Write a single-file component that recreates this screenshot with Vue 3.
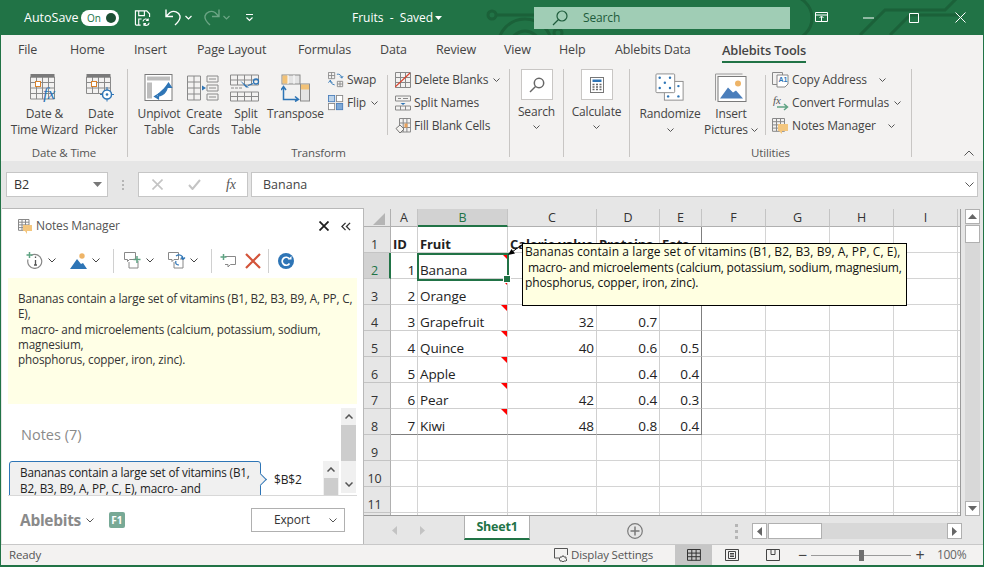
<script setup>
const tabs = [
  ['File', 52], ['Home', 64], ['Insert', 63], ['Page Layout', 101], ['Formulas', 82], ['Data', 56],
  ['Review', 68], ['View', 55], ['Help', 56], ['Ablebits Data', 107], ['Ablebits Tools', 110]
]
const cols = ['A', 'B', 'C', 'D', 'E', 'F', 'G', 'H', 'I']
const rows = [
  ['ID', 'Fruit', 'Calorie value', 'Proteins', 'Fats'],
  ['1', 'Banana', '', '', ''],
  ['2', 'Orange', '', '', ''],
  ['3', 'Grapefruit', '32', '0.7', ''],
  ['4', 'Quince', '40', '0.6', '0.5'],
  ['5', 'Apple', '', '0.4', '0.4'],
  ['6', 'Pear', '42', '0.4', '0.3'],
  ['7', 'Kiwi', '48', '0.8', '0.4'],
  ['', '', '', '', ''],
  ['', '', '', '', ''],
  ['', '', '', '', '']
]
const extra = [0, 1, 2, 3, 4]
function cellClass(r, c) {
  return {
    bold: r === 0,
    num: r > 0 && c !== 1,
    note: c === 1 && r > 0 && r < 8,
    inTable: r < 8 && c < 5,
    edgeR: r < 8 && c === 4,
    edgeB: r === 7 && c < 5
  }
}
function grid(x, y, nx, ny, w, h) {
  let d = ''
  for (let i = 0; i <= nx; i++) d += `M${x + i * w} ${y}v${ny * h}`
  for (let j = 0; j <= ny; j++) d += `M${x} ${y + j * h}h${nx * w}`
  return d
}
</script>

<template>
  <div class="app">
    <header class="title">
      <svg class="circuit" width="984" height="35" viewBox="0 0 984 35">
        <g fill="none" stroke="#1b6139" stroke-width="3">
          <circle cx="492" cy="15" r="4" />
          <path d="M496 15h38M498 46a27 27 0 0 1 54 0M510 46a15 15 0 0 1 30 0M790 -4a22 22 0 0 1 0 44M860 35l25-25h60l12-12M890 35l20-20h50" />
          <circle cx="558" cy="33" r="4" />
        </g>
      </svg>
      <span class="autosave">AutoSave</span>
      <span class="toggle"><b>On</b><i></i></span>
      <svg class="t-save" width="17" height="18" viewBox="0 0 18 18" fill="none" stroke="#fff" stroke-width="1.2"><path d="M7 16.5H2.5a1 1 0 0 1-1-1V1.5h12l3 3V8M5 1.5v5h6v-5M5 16V10h3" /><path d="M9.5 12.5a3 3 0 0 1 5.5-1M16 14a3 3 0 0 1-5.5 1.500M15 9.500v2.200h-2.200M10.500 17.200V15h2.200" /></svg>
      <svg class="t-undo" width="18" height="19" viewBox="0 0 18 19" fill="none" stroke="#fff" stroke-width="1.4"><path d="M2 1.500v7h7M2.200 8.200 6 4.500c4-2.500 9-.5 10 3.500 .6 3-1 5.500-5 9" /></svg>
      <svg class="t-chev c1" width="7" height="5" viewBox="0 0 7 5" fill="none" stroke="#fff" stroke-width="1.200"><path d="M.5 1l3 3 3-3" /></svg>
      <svg class="t-redo" width="18" height="19" viewBox="0 0 18 19" fill="none" stroke="#6ba585" stroke-width="1.400"><path d="M16 1.500v7H9M15.800 8.200 12 4.500C8 2 3 4 2 8c-.6 3 1 5.500 5 9" /></svg>
      <svg class="t-chev c2" width="7" height="5" viewBox="0 0 7 5" fill="none" stroke="#6ba585" stroke-width="1.200"><path d="M.5 1l3 3 3-3" /></svg>
      <svg class="t-custom" width="9" height="9" viewBox="0 0 9 9" fill="none" stroke="#fff" stroke-width="1.100"><path d="M1 1.500h7M1.500 4.500 4.500 7.500l3-3" /></svg>
      <span class="docname">Fruits&nbsp; -&nbsp; Saved</span>
      <svg class="t-drop" width="7" height="4" viewBox="0 0 7 4"><path d="M0 0h7L3.500 4z" fill="#fff" /></svg>
      <div class="searchbox">
        <svg width="16" height="16" viewBox="0 0 16 16" fill="none" stroke="#1f5c3c" stroke-width="1.200"><circle cx="10" cy="6" r="5" /><path d="M6.500 9.500 1 15" /></svg>
        <span>Search</span>
      </div>
      <svg class="win w1" width="14" height="11" viewBox="0 0 14 11" fill="none" stroke="#fff"><path d="M.5.500h12v9H.5zM.5 3h12M6.500 9V4.500M4.500 6l2-2 2 2" /></svg>
      <svg class="win w2" width="11" height="2" viewBox="0 0 11 2"><path d="M0 1h11" stroke="#fff" /></svg>
      <svg class="win w3" width="10" height="10" viewBox="0 0 10 10" fill="none" stroke="#fff"><path d="M.5.500h9v9h-9z" /></svg>
      <svg class="win w4" width="11" height="11" viewBox="0 0 11 11" fill="none" stroke="#fff"><path d="M.5.500l10 10M10.500.500l-10 10" /></svg>
    </header>

    <section class="ribbon">
      <nav class="tabs">
        <span v-for="t in tabs" :key="t[0]" class="tab" :class="{ active: t[0] === 'Ablebits Tools' }" :style="{ width: t[1] + 'px' }"><em>{{ t[0] }}</em></span>
      </nav>
      <div class="groups">
        <div class="group g-date">
          <div class="group-body">
            <div class="big w74">
              <svg width="30" height="28" viewBox="0 0 30 28" fill="none"><path :d="grid(.5,3.500,4,4,6,5.500)" stroke="#8a8a8a" /><rect x=".5" y=".5" width="24" height="3.500" fill="#7a7a7a" /><rect x="5.500" y="8" width="5" height="5" fill="#fff" stroke="#d9812b" /><text x="13" y="25" class="fx">fx</text></svg>
              <span>Date &amp;<br>Time Wizard</span>
            </div>
            <div class="big w38">
              <svg width="30" height="28" viewBox="0 0 30 28" fill="none"><path :d="grid(.5,3.500,4,3,6,5.500)" stroke="#8a8a8a" /><rect x=".5" y=".5" width="24" height="3.500" fill="#7a7a7a" /><rect x="5.500" y="8" width="5" height="5" fill="#fff" stroke="#d9812b" /><circle cx="21" cy="21" r="4.500" fill="#fff" stroke="#2e75b6" stroke-width="1.500" /><circle cx="21" cy="21" r="1.300" fill="#2e75b6" /><path d="M21 13.500v3M21 25.500v2.500M14 21h2.500M25.500 21H28" stroke="#2e75b6" /></svg>
              <span>Date<br>Picker</span>
            </div>
          </div>
          <label>Date &amp; Time</label>
        </div>

        <div class="group g-transform">
          <div class="group-body">
            <div class="big w46">
              <svg width="30" height="28" viewBox="0 0 30 28"><rect x="1" y="1" width="27" height="26" fill="#fff" stroke="#7a7a7a" /><path d="M3 3h23v4H3zM3 9h5v16H3z" fill="#bdbdbd" /><path d="M11 23c7 0 12-4 13-12M10.500 23l4-2.500v5zM24.500 9.500l-3 4.500h6z" fill="#2e75b6" stroke="#2e75b6" stroke-width="1.200" /></svg>
              <span>Unpivot<br>Table</span>
            </div>
            <div class="big w44">
              <svg width="34" height="28" viewBox="0 0 34 28" fill="none"><path :d="grid(.5,2.500,2,4,6.500,6)" stroke="#8a8a8a" /><path d="M20 2.500h11v6H20zM20 11.500h11v6H20zM20 20.500h11v6H20zM22 5.500h7M22 14.500h7M22 23.500h7" stroke="#8a8a8a" /><path d="M15 12l4 2.500-4 2.500z" fill="#2e75b6" /></svg>
              <span>Create<br>Cards</span>
            </div>
            <div class="big w40">
              <svg width="32" height="28" viewBox="0 0 32 28" fill="none"><path :d="grid(.5,1.500,4,2,7,5)" stroke="#8a8a8a" /><path :d="grid(.5,18.500,4,2,7,4.500)" stroke="#8a8a8a" /><path d="M1 14.500h12" stroke="#8a8a8a" stroke-dasharray="3 1" /><path d="M10 7l9 7h-3z" fill="#2e75b6" /><circle cx="26" cy="8" r="2.500" stroke="#2e75b6" stroke-width="1.300" /><path d="M23 10l-5 2" stroke="#2e75b6" stroke-width="1.300" /></svg>
              <span>Split<br>Table</span>
            </div>
            <div class="big w58">
              <svg width="30" height="28" viewBox="0 0 30 28" fill="none"><rect x="1" y="1.500" width="18" height="9" fill="#e4e4e4" stroke="#8a8a8a" /><rect x="1.500" y="2" width="5.500" height="8" fill="#f2c277" /><path d="M7 1.500v9M13 1.500v9" stroke="#fff" /><rect x="19.500" y="10.500" width="9" height="17" fill="#e4e4e4" stroke="#8a8a8a" /><rect x="20" y="11" width="8" height="5" fill="#f2c277" /><path d="M2.500 14v12h14M0 16.500l2.500-3.500 2.500 3.500M14 23l3.500 3-3.500 2" stroke="#2e75b6" stroke-width="1.500" /></svg>
              <span>Transpose</span>
            </div>
            <div class="smalls w63">
              <div class="small"><svg width="16" height="16" viewBox="0 0 18 18" fill="none"><path :d="grid(.5,.5,2,2,3.500,3.500)" stroke="#888" /><path :d="grid(10.500,10.500,2,2,3,3)" stroke="#888" /><path d="M10 2.500c3-.5 5 1 5.500 4M13.500 5l2 2 1.500-2.500M2.500 9c0 3 2 5 5 5.500M5 12.500l-2.500-3L.5 12" stroke="#2e75b6" /></svg><span>Swap</span></div>
              <div class="small"><svg width="16" height="16" viewBox="0 0 18 18"><rect x=".5" y=".5" width="7" height="7" fill="#bdd4ea" stroke="#4a7ebb" /><rect x="9.500" y=".5" width="7" height="7" fill="#fff" stroke="#888" /><rect x=".5" y="9.500" width="7" height="7" fill="#fff" stroke="#888" /><rect x="9.500" y="9.500" width="7" height="7" fill="#7fa9d6" stroke="#4a7ebb" /></svg><span>Flip</span><svg class="chev" width="7" height="4" viewBox="0 0 7 4"><path d="M.5.500l3 3 3-3" /></svg></div>
            </div>
            <div class="vsep"></div>
            <div class="smalls">
              <div class="small"><svg width="16" height="16" viewBox="0 0 16 16" fill="none"><path :d="grid(.5,.5,3,3,5,5)" stroke="#888" /><path d="M0 15 15 1" stroke="#d9432f" stroke-width="1.200" /></svg><span>Delete Blanks</span><svg class="chev" width="7" height="4" viewBox="0 0 7 4"><path d="M.5.500l3 3 3-3" /></svg></div>
              <div class="small"><svg width="16" height="16" viewBox="0 0 16 16" fill="none"><path d="M.5 1h15v5H.5zM.5 11h15v4H.5zM5.500 11v4M10.500 11v4M3 3.500h3M8 3.500h5" stroke="#888" /><path d="M5.500 8h5L8 10z" fill="#2e75b6" /></svg><span>Split Names</span></div>
              <div class="small"><svg width="16" height="16" viewBox="0 0 16 16" fill="none"><path :d="grid(4.500,.5,3,3,3.700,4.500)" stroke="#888" /><path d="M1 10.500 5 7l4 4-4 4z" fill="#f5f3f0" stroke="#777" /><rect x="9.500" y="5.500" width="3" height="4" fill="#e8a05a" /></svg><span>Fill Blank Cells</span></div>
            </div>
          </div>
          <label>Transform</label>
        </div>

        <div class="group g-search">
          <div class="tall">
            <div class="boxed"><svg width="16" height="16" viewBox="0 0 16 16" fill="none" stroke="#666" stroke-width="1.500"><circle cx="10" cy="6" r="4.700" /><path d="M6.500 9.500 1 15" /></svg></div>
            <span>Search</span>
            <svg class="chev" width="7" height="4" viewBox="0 0 7 4"><path d="M.5.500l3 3 3-3" /></svg>
          </div>
        </div>

        <div class="group g-calc">
          <div class="tall">
            <div class="boxed"><svg width="14" height="16" viewBox="0 0 14 16" fill="none"><rect x=".5" y=".5" width="13" height="15" stroke="#777" /><rect x="2.500" y="2.500" width="9" height="2.500" fill="#2e75b6" /><path d="M2.500 7.500h2M6 7.500h2M9.500 7.500h2M2.500 10h2M6 10h2M9.500 10h2M2.500 12.500h2M6 12.500h2M9.500 12.500h2" stroke="#666" stroke-width="1.300" /></svg></div>
            <span>Calculate</span>
            <svg class="chev" width="7" height="4" viewBox="0 0 7 4"><path d="M.5.500l3 3 3-3" /></svg>
          </div>
        </div>

        <div class="group g-util">
          <div class="group-body">
            <div class="big w64">
              <svg width="32" height="31" viewBox="0 0 32 31"><rect x="10" y="9" width="20" height="20" fill="#fff" stroke="#8a8a8a" /><rect x="1" y="1" width="20" height="20" rx="1" fill="#fff" stroke="#8a8a8a" /><g fill="#2e75b6"><circle cx="5" cy="5" r="1.300" /><circle cx="16" cy="5" r="1.300" /><circle cx="10.500" cy="10.500" r="1.300" /><circle cx="5" cy="16" r="1.300" /><circle cx="16" cy="16" r="1.300" /><circle cx="14" cy="25" r="1.300" /><circle cx="25" cy="25" r="1.300" /><circle cx="25" cy="14" r="1.300" /></g></svg>
              <span>Randomize</span>
              <svg class="chev" width="7" height="4" viewBox="0 0 7 4"><path d="M.5.500l3 3 3-3" /></svg>
            </div>
            <div class="big w58b">
              <svg width="32" height="28" viewBox="0 0 32 28"><path d="M.5 27V.5h27" fill="none" stroke="#9a9a9a" /><rect x="3" y="3" width="28" height="25" fill="#fff" stroke="#7a7a7a" /><circle cx="23" cy="10" r="3" fill="#eeb467" /><path d="M5 25 13 14l5 5 3-2 7 8z" fill="#4a7ebb" /></svg>
              <span>Insert<br>Pictures <svg class="chev inl" width="7" height="4" viewBox="0 0 7 4"><path d="M.5.500l3 3 3-3" /></svg></span>
            </div>
            <div class="vsep v2"></div>
            <div class="smalls">
              <div class="small"><svg width="17" height="17" viewBox="0 0 17 17" fill="none"><path d="M.5 1.500h10v12H.5z" stroke="#888" /><path d="M5 4h11v9l-3 3H5z" fill="#fff" stroke="#888" /><text x="6.500" y="11" class="a1">A1</text></svg><span>Copy Address</span><svg class="chev gap" width="7" height="4" viewBox="0 0 7 4"><path d="M.5.500l3 3 3-3" /></svg></div>
              <div class="small"><svg width="17" height="17" viewBox="0 0 17 17" fill="none"><text x="1" y="10" class="fx small-fx">fx</text><path d="M5 13h10M12 10l3.500 3-3.500 3" stroke="#5fa383" stroke-width="1.500" /></svg><span>Convert Formulas</span><svg class="chev" width="7" height="4" viewBox="0 0 7 4"><path d="M.5.500l3 3 3-3" /></svg></div>
              <div class="small"><svg width="17" height="17" viewBox="0 0 17 17" fill="none"><path :d="grid(.5,1.500,3,4,4,3.200)" stroke="#888" /><path d="M6 7h10v7h-6v3l-3-3H6z" fill="#f3c67e" /></svg><span>Notes Manager</span><svg class="chev gap" width="7" height="4" viewBox="0 0 7 4"><path d="M.5.500l3 3 3-3" /></svg></div>
            </div>
          </div>
          <label>Utilities</label>
        </div>

        <div class="collapse"><svg width="10" height="6" viewBox="0 0 10 6" fill="none" stroke="#555"><path d="M.5 5.500l4.500-4.500 4.500 4.500" /></svg></div>
      </div>
    </section>

    <section class="fbar">
      <div class="namebox"><span>B2</span><svg width="9" height="5" viewBox="0 0 9 5"><path d="M0 0h9L4.500 5z" fill="#777" /></svg></div>
      <div class="grip"><i></i><i></i><i></i></div>
      <div class="fbtns">
        <svg width="11" height="11" viewBox="0 0 11 11" fill="none" stroke="#c4c4c4" stroke-width="1.600"><path d="M.5.500l10 10M10.500.500l-10 10" /></svg>
        <svg width="13" height="11" viewBox="0 0 13 11" fill="none" stroke="#c4c4c4" stroke-width="2"><path d="M1 6l3.500 4L12 1" /></svg>
        <span class="fxbtn">fx</span>
      </div>
      <div class="finput"><span>Banana</span><svg class="chev" width="9" height="5" viewBox="0 0 9 5"><path d="M.5.500l4 4 4-4" /></svg></div>
    </section>

    <main class="body">
      <aside class="pane">
        <div class="pane-head">
          <svg width="15" height="15" viewBox="0 0 15 15" fill="none"><path :d="grid(.5,.5,3,4,3.500,2.700)" stroke="#888" /><path d="M5 6h9v6H9v3l-2-3H5z" fill="#f3c67e" /></svg>
          <span>Notes Manager</span>
          <svg class="px" width="10" height="10" viewBox="0 0 10 10" fill="none" stroke="#1f1f1f" stroke-width="1.800"><path d="M.5.500l9 9M9.500.500l-9 9" /></svg>
          <svg class="pdbl" width="10" height="9" viewBox="0 0 11 9" fill="none" stroke="#333" stroke-width="1.500"><path d="M5 .5 1 4.500l4 4M10 .5l-4 4 4 4" /></svg>
        </div>
        <div class="pane-tools">
          <svg class="i1" width="17" height="17" viewBox="0 0 17 17" fill="none"><path d="M5 3.500a7 7 0 1 1-3 4" stroke="#888" stroke-width="1.200" /><path d="M3.500 0v6M.5 3h6" stroke="#5fa383" stroke-width="1.500" /><path d="M9.500 4.500v1.500M9.500 8v5M8 13h3" stroke="#555" stroke-width="1.300" /></svg>
          <svg class="chev tb" width="8" height="5" viewBox="0 0 8 5"><path d="M.5.500l3.500 3.500 3.500-3.500" /></svg>
          <svg class="i2" width="17" height="16" viewBox="0 0 17 16"><circle cx="12" cy="3" r="2.700" fill="#eeb467" /><path d="M0 16 7 6l4 5 2-1 4 6z" fill="#2e75b6" /></svg>
          <svg class="chev tb" width="8" height="5" viewBox="0 0 8 5"><path d="M.5.500l3.500 3.500 3.500-3.500" /></svg>
          <i class="tsep s1"></i>
          <svg class="i3" width="18" height="17" viewBox="0 0 18 17" fill="none" stroke="#888"><path d="M.5.500h11v7h-6l-2 2v-2h-3zM5 10v6h9V9" /><path d="M13 4v7M9.500 7.500h7" stroke="#5fa383" stroke-width="1.500" /></svg>
          <svg class="chev tb" width="8" height="5" viewBox="0 0 8 5"><path d="M.5.500l3.500 3.500 3.500-3.500" /></svg>
          <svg class="i4" width="18" height="17" viewBox="0 0 18 17" fill="none" stroke="#888"><path d="M.5.500h10v7H6l-2 2v-2H.5zM6 10v6h9V7h-3" /><path d="M8 4c3-2 7-1 7 3M15 7.500l2-2M15 7.500l-2-2M11 13c-2 0-4-1-3-4" stroke="#2e75b6" stroke-width="1.200" /></svg>
          <svg class="chev tb" width="8" height="5" viewBox="0 0 8 5"><path d="M.5.500l3.500 3.500 3.500-3.500" /></svg>
          <i class="tsep s2"></i>
          <svg class="i5" width="16" height="16" viewBox="0 0 16 16" fill="none"><path d="M5 3.500h10.500v8h-5l-2.500 2.500v-2.500H5" stroke="#888" /><path d="M3.500 1v6M.5 4h6" stroke="#5fa383" stroke-width="1.500" /></svg>
          <svg class="i6" width="16" height="16" viewBox="0 0 16 16" fill="none" stroke="#d3543a" stroke-width="2.200"><path d="M1 1l14 14M15 1 1 15" /></svg>
          <i class="tsep s3"></i>
          <svg class="i7" width="16" height="16" viewBox="0 0 16 16"><circle cx="8" cy="8" r="8" fill="#2e75b6" /><path d="M11.500 6a4 4 0 1 0 0 4.500" fill="none" stroke="#fff" stroke-width="1.700" /><path d="M10 6.500h3.500V3z" fill="#fff" /></svg>
        </div>
        <div class="note-view">Bananas contain a large set of vitamins (B1, B2, B3, B9, A, PP, C,<br>E),<br>&nbsp;macro- and microelements (calcium, potassium, sodium,<br>magnesium,<br>phosphorus, copper, iron, zinc).</div>
        <div class="notes-list">
          <div class="notes-main">
            <h3>Notes (7)</h3>
            <div class="item-row">
              <div class="bubble">Bananas contain a large set of vitamins (B1,<br>B2, B3, B9, A, PP, C, E), macro- and</div>
              <span class="addr">$B$2</span>
              <div class="iscroll"><b><svg width="8" height="5" viewBox="0 0 8 5" fill="none" stroke="#555" stroke-width="1.500"><path d="M.5 4.500 4 1l3.500 3.500" /></svg></b><i></i></div>
            </div>
          </div>
          <div class="oscroll">
            <b><svg width="8" height="5" viewBox="0 0 8 5" fill="none" stroke="#555" stroke-width="1.500"><path d="M.5 4.500 4 1l3.500 3.500" /></svg></b>
            <i></i>
            <u></u>
            <b><svg width="8" height="5" viewBox="0 0 8 5" fill="none" stroke="#555" stroke-width="1.500"><path d="M.5.500 4 4l3.500-3.500" /></svg></b>
          </div>
        </div>
        <footer class="pane-foot">
          <strong>Ablebits</strong>
          <svg class="chev ab" width="8" height="5" viewBox="0 0 8 5"><path d="M.5.500l3.500 3.500 3.500-3.500" /></svg>
          <span class="f1">F1</span>
          <button class="export"><span>Export</span><svg class="chev" width="8" height="5" viewBox="0 0 8 5"><path d="M.5.500l3.500 3.500 3.500-3.500" /></svg></button>
        </footer>
      </aside>

      <section class="sheetwrap">
        <div class="sheetrow">
          <div class="sheet">
            <div class="corner"><svg width="12" height="12" viewBox="0 0 12 12"><path d="M12 0v12H0z" fill="#b5b5b5" /></svg></div>
            <div v-for="c in cols" :key="c" class="colh" :class="{ sel: c === 'B' }">{{ c }}</div>
            <div class="colh tail"></div>
            <template v-for="(row, r) in rows" :key="r">
              <div class="rowh" :class="{ sel: r === 1 }">{{ r + 1 }}</div>
              <div v-for="(v, c) in row" :key="c" class="cell" :class="cellClass(r, c)"><span>{{ v }}</span></div>
              <div v-for="e in extra" :key="'e' + e" class="cell"></div>
            </template>
            <div class="rowh stub"></div>
            <div v-for="i in 10" :key="'s' + i" class="stubc"></div>
            <div class="selection"><i></i></div>
            <svg class="leader" width="18" height="16" viewBox="0 0 18 16"><path d="M16 2 5 10" stroke="#000" /><path d="M1 13l3.500-6 3.500 4.500z" fill="#000" /></svg>
            <div class="tooltip"><span class="l1">Bananas contain a large set of vitamins (B1, B2, B3, B9, A, PP, C, E),</span><br><span class="l2">&nbsp;macro- and microelements (calcium, potassium, sodium, magnesium,</span><br>phosphorus, copper, iron, zinc).</div>
          </div>
          <div class="vscroll">
            <b><svg width="9" height="5" viewBox="0 0 9 5"><path d="M4.500 0 9 5H0z" fill="#666" /></svg></b>
            <i></i>
            <u></u>
            <b><svg width="9" height="5" viewBox="0 0 9 5"><path d="M0 0h9L4.500 5z" fill="#666" /></svg></b>
          </div>
        </div>
        <div class="tabsbar">
          <svg class="nav n1" width="5" height="9" viewBox="0 0 5 9"><path d="M5 0v9L0 4.500z" fill="#c3c3c3" /></svg>
          <svg class="nav n2" width="5" height="9" viewBox="0 0 5 9"><path d="M0 0v9l5-4.500z" fill="#c3c3c3" /></svg>
          <div class="sheettab">Sheet1</div>
          <svg class="plus" width="16" height="16" viewBox="0 0 16 16" fill="none" stroke="#7a7a7a"><circle cx="8" cy="8" r="7.300" stroke-width="1.200" /><path d="M8 3.500v9M3.500 8h9" stroke-width="1.500" /></svg>
          <div class="vdots"><i></i><i></i><i></i></div>
          <div class="hscroll">
            <b><svg width="5" height="9" viewBox="0 0 5 9"><path d="M5 0v9L0 4.500z" fill="#666" /></svg></b>
            <i></i>
            <u></u>
            <b><svg width="5" height="9" viewBox="0 0 5 9"><path d="M0 0v9l5-4.500z" fill="#666" /></svg></b>
          </div>
        </div>
      </section>
    </main>

    <footer class="status">
      <span class="ready">Ready</span>
      <svg class="ds" width="16" height="14" viewBox="0 0 16 14" fill="none" stroke="#555"><path d="M5 10H.5V.5h13V7" /><path d="M6 9h2l1-1.500L10 9h2v2l1 1-1 1h-2l-1 1-1-1H6v-1l-1-1 1-1z" /></svg>
      <span class="dstext">Display Settings</span>
      <div class="view on"><svg width="14" height="12" viewBox="0 0 14 12" fill="none"><path :d="grid(.5,.5,3,3,4.300,3.600)" stroke="#333" /></svg></div>
      <div class="view v-page"><svg width="14" height="12" viewBox="0 0 14 12" fill="none" stroke="#444"><path d="M.5.500h13v11H.5zM3.500 2.500h7v7h-7zM5 4.500h4M5 6h4M5 7.500h4" /></svg></div>
      <div class="view v-break"><svg width="14" height="12" viewBox="0 0 14 12" fill="none" stroke="#444"><path d="M.5 11.500V.5h13v11M5 .5v5h4v-5M.5 11.500h13" /></svg></div>
      <span class="zm">−</span>
      <div class="slider"><i></i></div>
      <span class="zp">+</span>
      <span class="pct">100%</span>
    </footer>
  </div>
</template>

<style>
html, body { margin: 0; padding: 0; background: #217346; }
</style>

<style scoped>
.app {
  width: 984px; height: 567px; box-sizing: border-box; overflow: hidden;
  display: flex; flex-direction: column;
  background: #217346; padding: 0 1px 2px 1px;
  font: 12px/16px "Open Sans", "Noto Sans", sans-serif; color: #444;
  letter-spacing: -.15px;
}
svg { display: block; flex: none; }
.chev { fill: none; stroke: #555; stroke-width: 1; }
.chev.inl { display: inline-block; vertical-align: 2px; }

.title { position: relative; height: 35px; flex: none; display: flex; align-items: center; color: #fff; }
.circuit { position: absolute; left: -1px; top: 0; }
.title > *:not(.circuit) { position: relative; flex: none; }
.autosave { margin-left: 23px; width: 57px; font-size: 12.500px; letter-spacing: 0; }
.toggle { width: 38px; height: 16px; border-radius: 8px; background: #fff; display: flex; align-items: center; justify-content: space-between; padding: 0 3px 0 6px; box-sizing: border-box; }
.toggle b { font-weight: 400; font-size: 10px; color: #217346; }
.toggle i { width: 10px; height: 10px; border-radius: 50%; background: #1c4f33; }
.t-save { margin-left: 15px; }
.t-undo { margin-left: 13px; }
.t-chev.c1 { margin-left: 3px; }
.t-redo { margin-left: 11px; }
.t-chev.c2 { margin-left: 2px; }
.t-custom { margin-left: 15px; }
.docname { margin-left: 98px; width: 80px; letter-spacing: 0; white-space: nowrap; }
.t-drop { margin-left: 3px; }
.searchbox { margin-left: 92px; width: 256px; height: 22px; background: #a0cdb5; display: flex; align-items: center; color: #1f5c3c; padding-left: 18px; box-sizing: border-box; gap: 15px; }
.win.w1 { margin-left: 25px; }
.win.w2 { margin-left: 34px; }
.win.w3 { margin-left: 35px; }
.win.w4 { margin-left: 36px; }

.ribbon { height: 126px; flex: none; background: #f3f2f1; display: flex; flex-direction: column; }
.tabs { height: 31px; display: flex; align-items: center; flex: none; padding-left: 17px; }
.tab { display: flex; flex: none; justify-content: flex-start; height: 31px; line-height: 30px; font-size: 12.500px; white-space: nowrap; }
.tab em { display: block; height: 28px; font-style: normal; position: relative; }
.tab.active { font-weight: 600; color: #444; font-size: 12.800px; }
.tab.active em::after { content: ""; position: absolute; left: 0; right: 0; bottom: 0; height: 2px; background: #217346; }
.groups { display: flex; flex: 1; min-height: 0; position: relative; }
.group { border-right: 1px solid #c8c6c4; display: flex; flex-direction: column; box-sizing: border-box; margin: 3px 0 4px; }
.group-body { flex: 1; display: flex; min-height: 0; }
.group label { text-align: center; height: 16px; line-height: 15px; font-size: 11.500px; color: #555; margin-bottom: -4px; }
.g-date { width: 127px; padding-left: 6px; }
.g-date label { margin-left: -6px; }
.g-transform { width: 382px; padding-left: 8px; }
.g-transform label { margin-left: -8px; }
.g-search { width: 54px; }
.g-calc { width: 66px; }
.g-util { width: 282px; padding-left: 8px; }
.g-util label { margin-left: -8px; }
.big { display: flex; flex-direction: column; align-items: center; flex: none; text-align: center; padding-top: 4px; box-sizing: border-box; white-space: nowrap; }
.big > svg:first-child { height: 29px; margin-bottom: 4px; }
.w74 { width: 75px; }
.w38 { width: 38px; }
.w46 { width: 46px; }
.w44 { width: 44px; }
.w40 { width: 40px; }
.w58 { width: 58px; padding-left: 1px; }
.w63 { width: 58px; flex: none; margin-left: 4px; }
.w64 { width: 64px; }
.w58b { width: 58px; }
.w64 .chev { margin-top: 6px; }
.smalls { display: flex; flex-direction: column; margin-top: -1px; }
.small { height: 23px; display: flex; align-items: center; gap: 3px; white-space: nowrap; }
.small .chev { margin-left: 2px; }
.small .chev.gap { margin-left: 9px; }
.vsep { width: 1px; height: 60px; background: #c8c6c4; margin: 6px 7px 0 1px; flex: none; }
.vsep.v2 { margin: 6px 6px 0 5px; }
.tall { display: flex; flex-direction: column; align-items: center; }
.boxed { width: 32px; height: 31px; box-sizing: border-box; background: #fff; border: 1px solid #c8c6c4; display: flex; align-items: center; justify-content: center; margin-bottom: 4px; }
.tall .chev { margin-top: 5px; }
.collapse { position: absolute; right: 9px; bottom: 5px; }
.fx { font: italic 17px "Liberation Serif", serif; fill: #2e75b6; letter-spacing: 0; }
.small-fx { font-size: 11px; fill: #555; }
.a1 { font: 700 7px "Liberation Sans", sans-serif; fill: #2e75b6; letter-spacing: 0; }

.fbar { height: 47px; flex: none; background: #e6e6e6; display: flex; padding: 11px 5px 0 5px; box-sizing: border-box; }
.namebox { width: 102px; height: 25px; box-sizing: border-box; background: #fff; border: 1px solid #c6c6c6; display: flex; align-items: center; justify-content: space-between; padding: 0 5px 0 7px; color: #333; font-size: 12.500px; }
.grip { width: 30px; display: flex; flex-direction: column; align-items: center; justify-content: center; gap: 2px; height: 25px; }
.grip i { width: 2px; height: 2px; background: #b5b5b5; }
.fbtns { width: 110px; height: 25px; box-sizing: border-box; background: #fff; border: 1px solid #c6c6c6; display: flex; align-items: center; justify-content: space-between; padding: 0 11px 0 13px; }
.fxbtn { font: italic 400 14px "Liberation Serif", serif; color: #555; letter-spacing: 0; }
.finput { margin-left: 3px; width: 727px; height: 25px; box-sizing: border-box; background: #fff; border: 1px solid #c6c6c6; display: flex; align-items: center; justify-content: space-between; padding: 0 3px 0 11px; color: #444; font-size: 12.500px; letter-spacing: 0; }

.body { flex: 1; min-height: 0; display: flex; background: #e6e6e6; }
.pane { width: 362px; flex: none; margin-left: 1px; background: #fff; border-top: 1px solid #b8b8b8; display: flex; flex-direction: column; box-sizing: border-box; border-right: 1px solid #b8b8b8; }
.pane-head { height: 34px; flex: none; display: flex; align-items: center; padding: 0 12px 0 16px; gap: 3px; }
.pane-head span { color: #555; white-space: nowrap; flex: none; }
.pane-head .px { margin-left: auto; }
.pane-head .pdbl { margin-left: 9px; }
.pane-tools { height: 35px; flex: none; display: flex; align-items: center; padding-left: 24px; }
.pane-tools .chev { stroke: #444; }
.chev.tb { margin-left: 4px; }
.i1 + .chev.tb, .i2 + .chev.tb { margin-left: 5px; }
.i2 { margin-left: 14px; }
.i4 { margin-left: 14px; }
.i6 { margin-left: 9px; }
.tsep { width: 1px; height: 24px; background: #d0d0d0; flex: none; }
.tsep.s1 { margin: 0 10px 0 13px; }
.tsep.s2 { margin: 0 8px 0 13px; }
.tsep.s3 { margin: 0 9px 0 7px; }
.note-view { height: 126px; flex: none; margin: 0 6px; box-sizing: border-box; background: #ffffe6; padding: 13px 10px 0 10px; font-size: 11.700px; line-height: 15.300px; color: #333; white-space: nowrap; }
.notes-list { height: 91px; flex: none; display: flex; overflow: hidden; padding: 4px 0 0 6px; box-sizing: border-box; }
.notes-main { width: 333px; flex: none; display: flex; flex-direction: column; overflow: hidden; }
.notes-main h3 { margin: 15px 0 0 13px; height: 38px; flex: none; font-weight: 400; font-size: 14.500px; line-height: 24px; color: #8a8a8a; letter-spacing: 0; }
.item-row { display: flex; height: 34px; flex: none; padding-right: 2px; box-sizing: content-box; }
.bubble { width: 252px; height: 44px; flex: none; box-sizing: border-box; margin-left: 1px; border: 1px solid #2e75b6; border-radius: 3px; background: #f0f0f0; padding: 3px 10px 0 10px; font-size: 11.700px; line-height: 15.500px; color: #222; white-space: nowrap; position: relative; }
.bubble::after { content: ""; position: absolute; right: -5px; top: 13px; width: 8px; height: 8px; background: #f0f0f0; border-top: 1px solid #2e75b6; border-right: 1px solid #2e75b6; transform: rotate(45deg); }
.addr { margin-left: 13px; width: 49px; flex: none; line-height: 38px; color: #222; height: 34px; }
.iscroll { width: 16px; flex: none; background: #f0f0f0; display: flex; flex-direction: column; height: 34px; }
.iscroll b { height: 17px; display: flex; align-items: center; justify-content: center; }
.iscroll i { margin: 0 1px; flex: 1; background: #cdcdcd; }
.oscroll { width: 15px; flex: none; background: #f0f0f0; display: flex; flex-direction: column; height: 85px; }
.oscroll b { height: 17px; flex: none; display: flex; align-items: center; justify-content: center; }
.oscroll i { height: 36px; flex: none; background: #cdcdcd; }
.oscroll u { flex: 1; }
.pane-foot { flex: 1; margin: 0 6px 0 6px; border-top: 1px solid #d8d8d8; display: flex; align-items: center; padding-left: 12px; }
.pane-foot strong { font-size: 15.500px; font-weight: 700; color: #8a8a8a; letter-spacing: -.3px; }
.chev.ab { margin-left: 5px; }
.f1 { margin-left: 15px; width: 16px; height: 16px; border-radius: 2px; background: #78a996; color: #fff; font: 700 10px/16px "Open Sans", sans-serif; text-align: center; letter-spacing: 0; }
.export { margin-left: 126px; width: 94px; height: 24px; box-sizing: border-box; background: #fff; border: 1px solid #b0b0b0; border-radius: 0; display: flex; align-items: center; justify-content: space-between; padding: 0 7px 0 22px; font: inherit; color: #333; letter-spacing: -.15px; }

.sheetwrap { flex: 1; min-width: 0; display: flex; flex-direction: column; padding-top: 1px; }
.sheetrow { display: flex; height: 307px; flex: none; }
.sheet {
  width: 597px; flex: none; position: relative; overflow: hidden; background: #fff;
  display: grid; grid-template-columns: 27px 27px 90px 89px 63px 42px 64px 64px 64px 64px 3px;
  grid-template-rows: 18px repeat(11, 26px) 3px; align-content: start;
  font: 13.500px/16px "Open Sans", sans-serif; color: #222; letter-spacing: -.1px;
  border-bottom: 1px solid #9a9a9a; border-right: 1px solid #9a9a9a; box-sizing: border-box;
}
.corner { background: #e6e6e6; border-right: 1px solid #b0b0b0; border-bottom: 1px solid #b0b0b0; box-sizing: border-box; padding: 4px 0 0 9px; }
.colh { background: #e6e6e6; border-right: 1px solid #c4c4c4; border-bottom: 1px solid #b0b0b0; text-align: center; box-sizing: border-box; font-size: 12.500px; line-height: 17px; color: #333; }
.colh.sel { background: #d2d2d2; border-bottom: 2px solid #217346; color: #217346; }
.rowh { background: #e6e6e6; border-right: 1px solid #b0b0b0; border-bottom: 1px solid #c4c4c4; box-sizing: border-box; text-align: center; font-size: 12.500px; line-height: 35px; color: #333; padding-right: 5px; }
.rowh.sel { background: #d2d2d2; border-right: 2px solid #217346; color: #217346; padding-right: 4px; }
.rowh.stub { line-height: 1; border-bottom: 0; }
.cell { border-right: 1px solid #d4d4d4; border-bottom: 1px solid #d4d4d4; box-sizing: border-box; display: flex; align-items: flex-end; padding: 0 2px 0 2px; white-space: nowrap; overflow: hidden; position: relative; }
.cell.bold { font-weight: 700; overflow: visible; z-index: 0; font-size: 13px; }
.cell.num { justify-content: flex-end; }
.cell.inTable { border-color: #cfcfcf; }
.cell.edgeR { border-right-color: #7f7f7f; }
.cell.edgeB { border-bottom-color: #7f7f7f; }
.cell.note::after { content: ""; position: absolute; right: 0; top: 0; border-style: solid; border-width: 0 6px 6px 0; border-color: transparent #f00 transparent transparent; }
.stubc { border-right: 1px solid #d4d4d4; }
.selection { position: absolute; left: 53px; top: 44px; width: 92px; height: 28px; box-sizing: border-box; border: 2px solid #217346; }
.selection i { position: absolute; right: -4px; bottom: -4px; width: 6px; height: 6px; background: #217346; border: 1px solid #fff; }
.leader { position: absolute; left: 143px; top: 33px; }
.tooltip { position: absolute; left: 158px; top: 34px; width: 385px; height: 63px; box-sizing: border-box; background: #ffffe1; border: 1px solid #000; padding: 0 2px; font: 12px/15.500px "Open Sans", sans-serif; color: #111; white-space: nowrap; letter-spacing: -.1px; }
.tooltip .l1 { letter-spacing: .08px; }
.tooltip .l2 { letter-spacing: -.22px; }

.vscroll { width: 15px; margin-left: 4px; flex: none; display: flex; flex-direction: column; background: #d8d8d8; }
.vscroll b { height: 15px; flex: none; display: flex; align-items: center; justify-content: center; background: #fff; border: 1px solid #b0b0b0; box-sizing: border-box; }
.vscroll i { height: 18px; flex: none; background: #fff; border: 1px solid #b0b0b0; box-sizing: border-box; margin-top: 1px; }
.vscroll u { flex: 1; }
.tabsbar { flex: 1; display: flex; align-items: flex-start; background: #e6e6e6; }
.nav { margin-top: 10px; }
.nav.n1 { margin-left: 28px; }
.nav.n2 { margin-left: 23px; }
.sheettab { margin-left: 39px; width: 66px; height: 24px; box-sizing: border-box; background: #fff; border: 1px solid #b0b0b0; border-top: 0; border-bottom: 2px solid #217346; text-align: center; font-weight: 700; font-size: 12.500px; line-height: 22px; color: #217346; letter-spacing: -.2px; }
.plus { margin-left: 97px; margin-top: 7px; }
.vdots { margin-left: 92px; margin-top: 8px; display: flex; flex-direction: column; gap: 3px; }
.vdots i { width: 3px; height: 3px; background: #b5b5b5; }
.hscroll { margin-left: 14px; margin-top: 7px; width: 210px; height: 16px; flex: none; display: flex; background: #d8d8d8; }
.hscroll b { width: 15px; flex: none; display: flex; align-items: center; justify-content: center; background: #fff; border: 1px solid #b0b0b0; box-sizing: border-box; }
.hscroll i { width: 54px; flex: none; background: #fff; border: 1px solid #b0b0b0; box-sizing: border-box; margin-left: 1px; }
.hscroll u { flex: 1; }

.status { height: 21px; flex: none; background: #f3f2f1; border-top: 1px solid #c8c8c8; box-sizing: border-box; display: flex; align-items: center; }
.status > * { flex: none; }
.ready { margin-left: 8px; color: #555; font-size: 11.500px; width: 545px; }
.dstext { margin-left: 1px; width: 104px; color: #555; white-space: nowrap; font-size: 11.500px; }
.view { width: 37px; height: 20px; display: flex; align-items: center; justify-content: center; }
.view.on { background: #c6c6c6; }
.v-page { width: 40px; }
.v-break { width: 41px; }
.zm { margin-left: 5px; width: 13px; font-size: 16px; color: #444; }
.slider { width: 100px; height: 1px; background: #9a9a9a; position: relative; }
.slider i { position: absolute; left: 48px; top: -5px; width: 5px; height: 11px; background: #6f6f6f; }
.zp { width: 18px; font-size: 16px; color: #444; text-align: center; }
.pct { margin-left: 8px; color: #666; letter-spacing: -.3px; }
</style>
